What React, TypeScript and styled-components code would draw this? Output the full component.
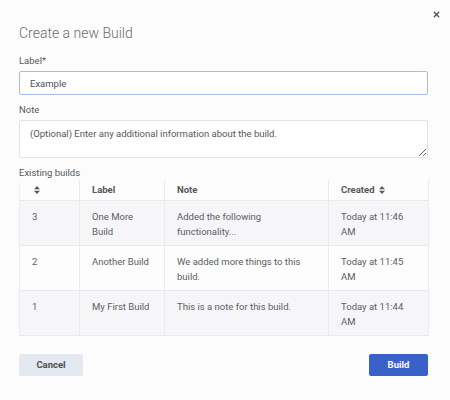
import React from 'react';
import styled, { createGlobalStyle } from 'styled-components';
import { X } from 'lucide-react';

const GlobalStyle = createGlobalStyle`
    html, body { margin: 0; padding: 0; background: #fcfcfc; }
    * { box-sizing: border-box; }
`;

const Modal = styled.div`
    position: relative;
    width: 450px;
    height: 400px;
    padding: 23px 22px 0 19px;
    background: #fcfcfc;
    font-family: Roboto, 'Noto Sans', sans-serif;
    color: #555a61;
    display: flex;
    flex-direction: column;
`;

const CloseBtn = styled.button`
    position: absolute;
    top: 9px;
    right: 9px;
    width: 10px;
    height: 10px;
    padding: 0;
    border: none;
    background: none;
    color: #4a4d52;
    display: flex;
    align-items: center;
    justify-content: center;
    cursor: pointer;
`;

const Title = styled.h2`
    margin: 0;
    font-size: 14px;
    line-height: 20px;
    font-weight: 300;
    color: #6a6d72;
`;

const FieldLabel = styled.label<{ $top: number }>`
    display: block;
    margin-top: ${(p) => p.$top}px;
    font-size: 9.5px;
    line-height: 14px;
    color: #55585d;
`;

const TextInput = styled.input`
    margin-top: 3px;
    width: 100%;
    height: 24px;
    padding: 0 10px;
    border: 1px solid #a9bbec;
    border-radius: 2px;
    background: #fff;
    font-family: inherit;
    font-size: 9.5px;
    color: #4f5257;
    outline: none;
`;

const TextArea = styled.textarea`
    margin-top: 3px;
    width: 100%;
    height: 38px;
    padding: 6px 10px;
    border: 1px solid #e1e3e8;
    border-radius: 2px;
    background: #fff;
    font-family: inherit;
    font-size: 9.5px;
    line-height: 13px;
    color: #4f5257;
    outline: none;
    resize: vertical;

    &::placeholder { color: #55585d; }
`;

const Table = styled.table`
    width: 409px;
    border-collapse: collapse;
    table-layout: fixed;
    font-size: 9.5px;
`;

const HeadCell = styled.th<{ $w: number }>`
    width: ${(p) => p.$w}px;
    height: 20px;
    padding: 0 11px 0 12px;
    text-align: left;
    font-weight: 700;
    color: #54575c;
    background: #fdfdfd;
    border-left: 1px solid #e8eaef;
    border-bottom: 1px solid #e8eaef;
    white-space: nowrap;

    &:first-child { border-left-color: #f3f4f6; }
    &:last-child { border-right: 1px solid #e8eaef; }
`;

const Row = styled.tr<{ $striped: boolean }>`
    height: 45px;
    background: ${(p) => (p.$striped ? '#f6f6f8' : '#fdfdfd')};
`;

const Cell = styled.td`
    padding: 8px 11px 0 12px;
    vertical-align: top;
    line-height: 15px;
    color: #5a5d62;
    border: 1px solid #e8eaef;
`;

const SortIcon = styled.svg`
    display: inline-block;
    vertical-align: -1px;
    margin-left: 2px;
`;

const Footer = styled.div`
    margin-top: 18px;
    display: flex;
    justify-content: space-between;
`;

const Button = styled.button<{ $primary?: boolean }>`
    height: 22px;
    padding: 0;
    width: ${(p) => (p.$primary ? 59 : 64)}px;
    border: none;
    border-radius: 2px;
    font-family: inherit;
    font-size: 9.5px;
    font-weight: 700;
    color: ${(p) => (p.$primary ? '#ffffff' : '#4a4d52')};
    background: ${(p) => (p.$primary ? '#3a61c9' : '#e4e8f0')};
    cursor: pointer;
`;

function Sort() {
    return (
        <SortIcon width="6" height="8" viewBox="0 0 6 8">
            <path d="M3 0 L6 3.3 H0 Z M3 8 L6 4.7 H0 Z" fill="#55585d" />
        </SortIcon>
    );
}

const builds = [
    { id: 3, label: 'One More Build', note: 'Added the following functionality...', created: 'Today at 11:46 AM' },
    { id: 2, label: 'Another Build', note: 'We added more things to this build.', created: 'Today at 11:45 AM' },
    { id: 1, label: 'My First Build', note: 'This is a note for this build.', created: 'Today at 11:44 AM' },
];

export default function App() {
    return (
        <>
            <GlobalStyle />
            <Modal>
                <CloseBtn aria-label="Close">
                    <X size={9} strokeWidth={3.5} />
                </CloseBtn>
                <Title>Create a new Build</Title>

                <FieldLabel $top={11}>Label*</FieldLabel>
                <TextInput defaultValue="Example" />

                <FieldLabel $top={8}>Note</FieldLabel>
                <TextArea placeholder="(Optional) Enter any additional information about the build." />

                <FieldLabel $top={8}>Existing builds</FieldLabel>
                <Table>
                    <thead>
                        <tr>
                            <HeadCell $w={60}><Sort /></HeadCell>
                            <HeadCell $w={85}>Label</HeadCell>
                            <HeadCell $w={164}>Note</HeadCell>
                            <HeadCell $w={100}>Created <Sort /></HeadCell>
                        </tr>
                    </thead>
                    <tbody>
                        {builds.map((b, i) => (
                            <Row key={b.id} $striped={i % 2 === 0}>
                                <Cell>{b.id}</Cell>
                                <Cell>{b.label}</Cell>
                                <Cell>{b.note}</Cell>
                                <Cell>{b.created}</Cell>
                            </Row>
                        ))}
                    </tbody>
                </Table>

                <Footer>
                    <Button>Cancel</Button>
                    <Button $primary>Build</Button>
                </Footer>
            </Modal>
        </>
    );
}
